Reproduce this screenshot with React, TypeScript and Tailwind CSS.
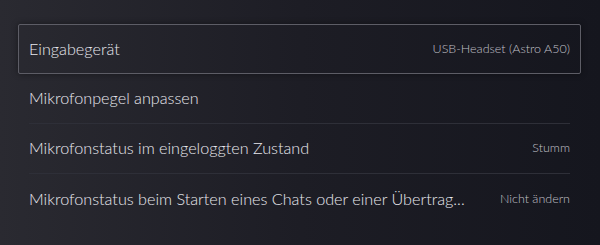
const rows = [
  { label: 'Mikrofonpegel anpassen', value: '' },
  { label: 'Mikrofonstatus im eingeloggten Zustand', value: 'Stumm' },
  { label: 'Mikrofonstatus beim Starten eines Chats oder einer Übertrag...', value: 'Nicht ändern' },
]

export default function App() {
  return (
    <div
      className="h-[245px] w-[600px] overflow-hidden bg-gradient-to-r from-[#2a2a31] via-[#1d1d25] to-[#15161e] pt-[24px] pl-[18px] pr-[19px]"
      style={{ fontFamily: 'Lato, "Noto Sans", sans-serif' }}
    >
      {/* focused row */}
      <div className="flex h-[50px] items-center justify-between rounded-[2px] border border-[#5d5d66] px-[10px] shadow-[0_0_6px_rgba(0,0,0,0.4)]">
        <span className="text-[16.2px] font-light text-[#e8e8ee]">Eingabegerät</span>
        <span className="whitespace-nowrap text-[12.5px] font-light text-[#c0c0c8]">USB-Headset (Astro A50)</span>
      </div>

      <div className="px-[11px]">
        {rows.map((r, i) => (
          <div
            key={i}
            className={
              'flex h-[50px] items-center justify-between' +
              (i < rows.length - 1 ? ' border-b border-[#2e2f38]' : '')
            }
          >
            <span className="whitespace-nowrap text-[16.2px] font-light text-[#e8e8ee]">{r.label}</span>
            {r.value && <span className="whitespace-nowrap text-[12.5px] font-light text-[#c0c0c8]">{r.value}</span>}
          </div>
        ))}
      </div>
    </div>
  )
}
